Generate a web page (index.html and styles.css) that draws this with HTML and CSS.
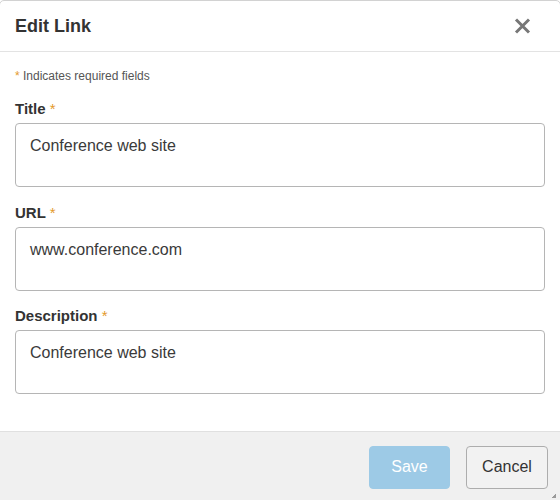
FILE: index.html
```html
<!DOCTYPE html>
<html>
<head>
<meta charset="utf-8">
<link rel="stylesheet" href="styles.css">
</head>
<body>
<div class="modal">
  <div class="modal-header">
    <h2 class="modal-title">Edit Link</h2>
    <button class="close" aria-label="Close">
      <svg width="17" height="16" viewBox="0 0 17 16"><path d="M2 1.5 L15 14.5 M15 1.5 L2 14.5" stroke="#777" stroke-width="3" stroke-linecap="butt"/></svg>
    </button>
  </div>
  <div class="modal-body">
    <p class="note"><span class="req">*</span> Indicates required fields</p>
    <div class="group">
      <label class="label">Title <span class="req">*</span></label>
      <textarea class="field">Conference web site</textarea>
    </div>
    <div class="group">
      <label class="label">URL <span class="req">*</span></label>
      <textarea class="field">www.conference.com</textarea>
    </div>
    <div class="group">
      <label class="label">Description <span class="req">*</span></label>
      <textarea class="field">Conference web site</textarea>
    </div>
  </div>
  <div class="modal-footer">
    <button class="btn btn-save">Save</button>
    <button class="btn btn-cancel">Cancel</button>
    <span class="grip"></span>
  </div>
</div>
</body>
</html>
```
FILE: styles.css
```css
html, body {
  margin: 0;
  padding: 0;
  background: #ffffff;
}
body {
  font-family: "Liberation Sans", Arial, sans-serif;
  color: #333333;
  overflow: hidden;
}
.modal {
  width: 562px;
  margin-left: -1px;
  box-sizing: border-box;
  border: 1px solid #d2d2d2;
  border-radius: 5px 5px 0 0;
  background: #fff;
  position: relative;
}
.modal-header {
  height: 50px;
  border-bottom: 1px solid #e3e3e3;
  display: flex;
  align-items: center;
  justify-content: space-between;
  padding: 0 15px;
}
.modal-title {
  margin: 0;
  font-size: 18px;
  font-weight: bold;
  line-height: 50px;
  color: #333;
}
.close {
  border: 0;
  background: none;
  padding: 0;
  margin: 0 14px 0 0;
  width: 17px;
  height: 16px;
  display: block;
}
.close svg { display: block; }
.modal-body {
  padding: 16px 15px 21px;
}
.note {
  margin: 0 0 15px;
  font-size: 12px;
  line-height: 16px;
  color: #555;
}
.req {
  color: #e49a2c;
}
.group {
  margin-bottom: 15.5px;
}
.label {
  display: block;
  font-size: 15px;
  font-weight: bold;
  line-height: 20px;
  margin-bottom: 4px;
  color: #333;
}
.label .req {
  font-weight: normal;
}
.field {
  display: block;
  width: 530px;
  height: 64px;
  box-sizing: border-box;
  border: 1px solid #b5b5b5;
  border-radius: 4px;
  padding: 12px 14px;
  font-family: "Liberation Sans", Arial, sans-serif;
  font-size: 16px;
  line-height: 20px;
  color: #3a3a3a;
  resize: none;
  overflow: hidden;
  margin: 0;
  background: #fff;
}
.modal-footer {
  border-top: 1px solid #e0e0e0;
  background: #f0f0f0;
  padding: 14px 12px 19px;
  display: flex;
  justify-content: flex-end;
  gap: 16px;
  position: relative;
}
.btn {
  height: 43px;
  border-radius: 4px;
  font-family: "Liberation Sans", Arial, sans-serif;
  font-size: 16px;
  padding: 0;
  margin: 0;
}
.btn-save {
  width: 81px;
  background: #9dcae6;
  border: 1px solid #9dcae6;
  color: #ffffff;
}
.btn-cancel {
  width: 82px;
  background: #f2f2f2;
  border: 1px solid #adadad;
  color: #333;
}
.grip {
  position: absolute;
  right: 4px;
  top: 62px;
  width: 4px;
  height: 4px;
  background: linear-gradient(135deg, transparent 50%, #9a9a9a 50%);
}
```
